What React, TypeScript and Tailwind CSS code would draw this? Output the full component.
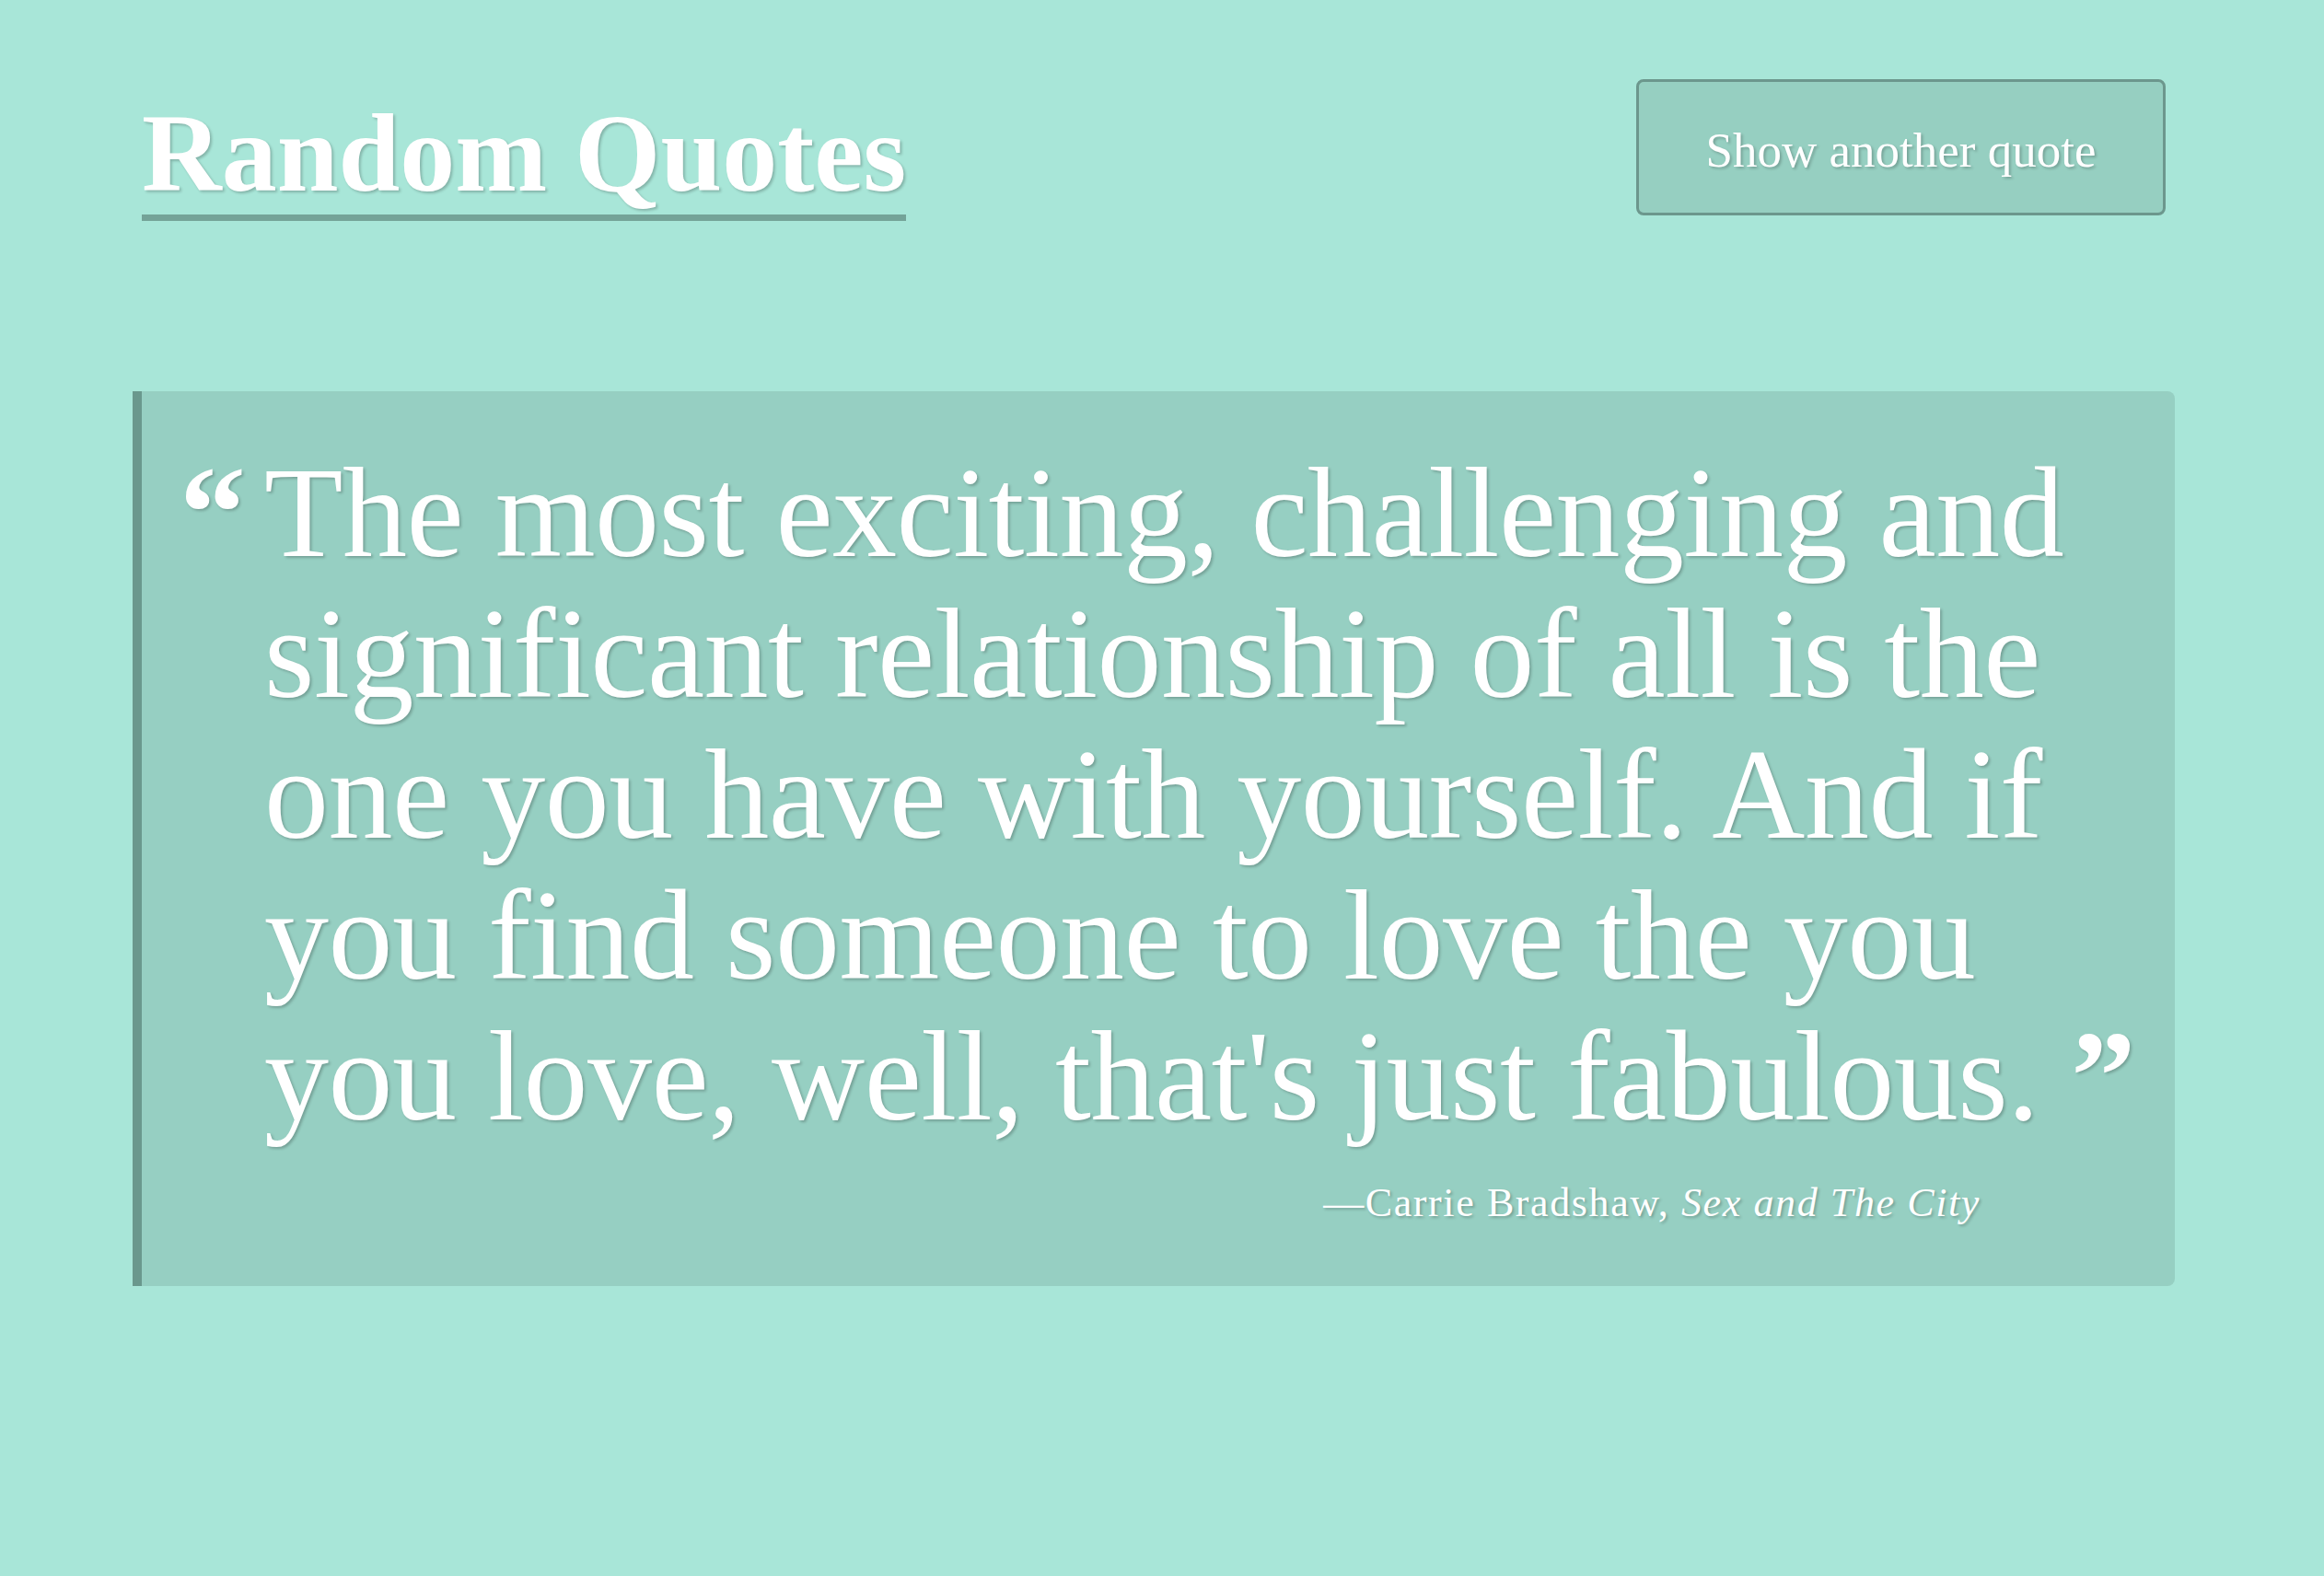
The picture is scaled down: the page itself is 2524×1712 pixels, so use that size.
const shadow = '[text-shadow:2px_2px_3px_rgba(0,0,0,0.22)]'

export default function App() {
  return (
    <div className="min-h-screen bg-[#a8e6d8] font-['Liberation_Serif',serif] text-white">
      <header className="flex items-start justify-between pl-[154px] pr-[172px] pt-[86px]">
        <h1
          className={`mt-[14px] inline-block border-b-[7px] border-[#74a398] text-[120px] font-bold leading-[133px] ${shadow}`}
        >
          Random Quotes
        </h1>
        <button
          className={`h-[148px] w-[575px] rounded-[8px] border-[3px] border-[#6c978d] bg-[#96cfc1] pt-[8px] text-[53px] text-white ${shadow}`}
        >
          Show another quote
        </button>
      </header>

      <section className="ml-[144px] mt-[185px] w-[2218px] rounded-r-[8px] border-l-[10px] border-[#6a988d] bg-[#96cfc2] pb-[66px] pl-[41px] pr-[10px] pt-[55px]">
        <div className="flex">
          <span className={`w-[92px] shrink-0 text-[144px] font-bold leading-[153px] ${shadow}`}>
            “
          </span>
          <div className="flex-1">
            <p className={`text-[140px] leading-[153px] tracking-[-0.5px] ${shadow}`}>
              The most exciting, challenging and significant relationship of all is the one you
              have with yourself. And if you find someone to love the you you love, well, that's
              just fabulous.{'\u00a0'}
              <span className="font-bold">”</span>
            </p>
            <p
              className={`mr-[201px] mt-[37px] text-right text-[44px] leading-[49px] tracking-[1.6px] ${shadow}`}
            >
              —Carrie Bradshaw, <cite className="italic">Sex and The City</cite>
            </p>
          </div>
        </div>
      </section>
    </div>
  )
}
